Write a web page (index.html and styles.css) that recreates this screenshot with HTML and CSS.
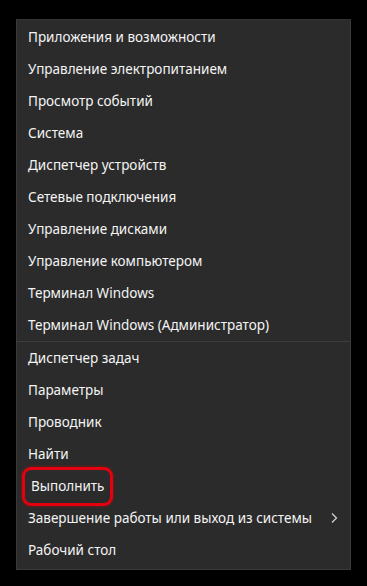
FILE: index.html
```html
<html lang="ru"><head><meta charset="utf8">
    <title>Меню Win+X</title>
    <link rel="stylesheet" href="styles.css">
    </head><body>
    <ul class="menu">
        <li>Приложения и возможности</li>
        <li>Управление электропитанием</li>
        <li>Просмотр событий</li>
        <li>Система</li>
        <li>Диспетчер устройств</li>
        <li>Сетевые подключения</li>
        <li>Управление дисками</li>
        <li>Управление компьютером</li>
        <li>Терминал Windows</li>
        <li>Терминал Windows (Администратор)</li>
        <li class="sep"></li>
        <li>Диспетчер задач</li>
        <li>Параметры</li>
        <li>Проводник</li>
        <li>Найти</li>
        <li><span class="mark">Выполнить</span></li>
        <li class="sub">Завершение работы или выход из системы
            <svg width="8" height="12" viewBox="0 0 8 12"><path d="M2 1.5 L6.5 6 L2 10.5" fill="none" stroke="#d0d0d0" stroke-width="1.3"/></svg>
        </li>
        <li>Рабочий стол</li>
    </ul>
    </body></html>
```
FILE: styles.css
```css
body {
    background: #000;
    margin: 0;
    padding: 19px 16px;
    font-family: "Noto Sans", sans-serif;
}

.menu {
    list-style: none;
    margin: 0;
    padding: 1px 0 3px;
    background: #2b2b2b;
    border: 1px solid #3a3a3a;
    border-top-color: #333;
}

.menu li {
    display: flex;
    align-items: center;
    height: 32px;
    padding: 0 11px;
    color: #f4f4f4;
    font-size: 13.5px;
}

.menu li.sep {
    height: 1px;
    padding: 0;
    background: #3c3c3c;
}

.menu li.sub {
    justify-content: space-between;
    padding-right: 12px;
}

.mark {
    margin-left: -6px;
    padding: 7px 6px 8px;
    border: 3px solid #e4000f;
    border-radius: 9px;
    box-shadow: 0 0 3px rgba(255,0,0,0.5);
}
```
